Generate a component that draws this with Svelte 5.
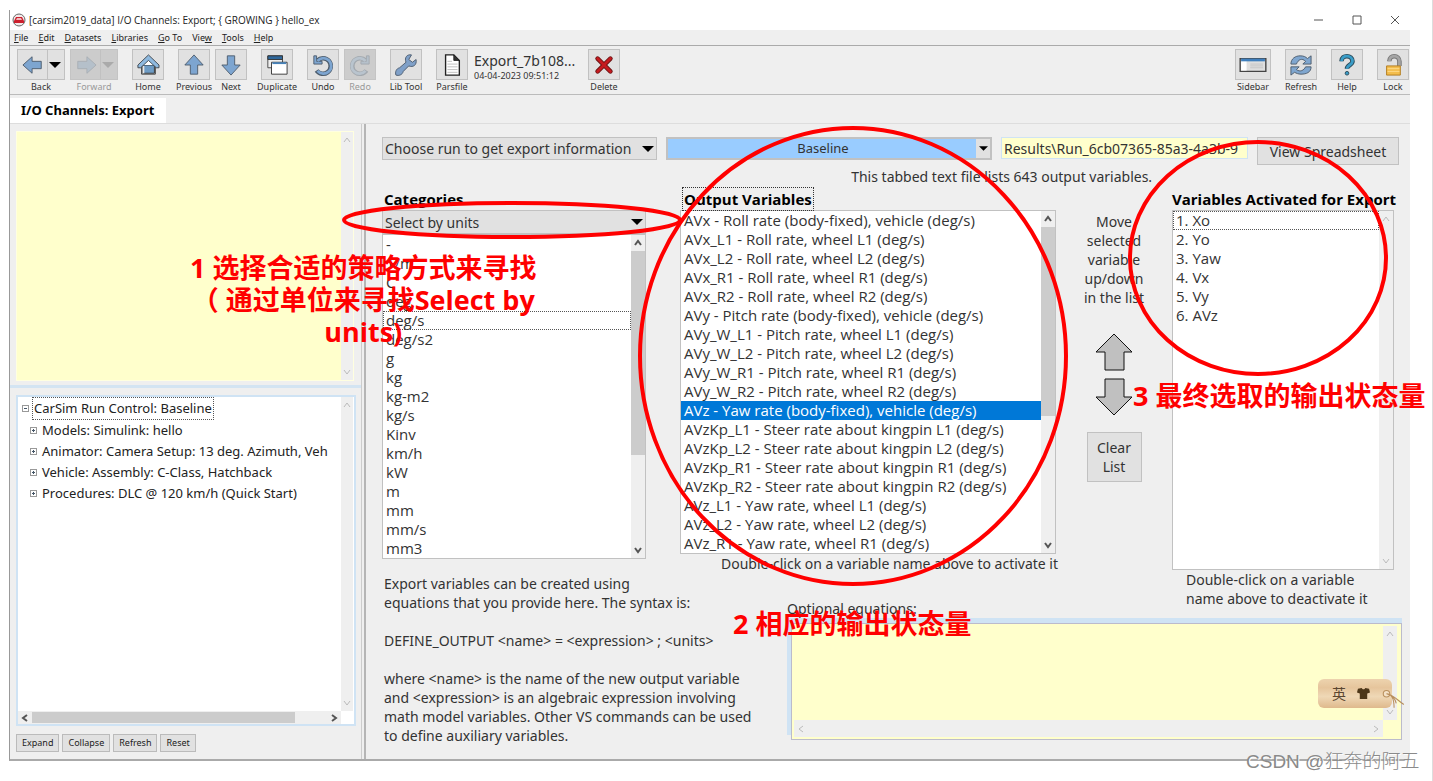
<script lang="ts">
  const menus = [
    ["", "F", "ile"],
    ["", "E", "dit"],
    ["", "D", "atasets"],
    ["", "L", "ibraries"],
    ["", "G", "o To"],
    ["Vie", "w", ""],
    ["", "T", "ools"],
    ["", "H", "elp"],
  ];

  const toolGroups = [
    ["Home"],
    ["Previous", "Next"],
    ["Duplicate"],
    ["Undo", "Redo"],
    ["Lib Tool"],
    ["Parsfile"],
  ];
  const rightTools = ["Sidebar", "Refresh", "Help", "Lock"];

  const treeItems = [
    "Models: Simulink: hello",
    "Animator: Camera Setup: 13 deg. Azimuth, Veh",
    "Vehicle: Assembly: C-Class, Hatchback",
    "Procedures: DLC @ 120 km/h (Quick Start)",
  ];
  const treeActions = ["Expand", "Collapse", "Refresh", "Reset"];

  const units = [
    "-", "1/m", "C", "deg", "deg/s", "deg/s2", "g", "kg", "kg-m2",
    "kg/s", "Kinv", "km/h", "kW", "m", "mm", "mm/s", "mm3",
  ];

  const outputs = [
    "AVx - Roll rate (body-fixed), vehicle (deg/s)",
    "AVx_L1 - Roll rate, wheel L1 (deg/s)",
    "AVx_L2 - Roll rate, wheel L2 (deg/s)",
    "AVx_R1 - Roll rate, wheel R1 (deg/s)",
    "AVx_R2 - Roll rate, wheel R2 (deg/s)",
    "AVy - Pitch rate (body-fixed), vehicle (deg/s)",
    "AVy_W_L1 - Pitch rate, wheel L1 (deg/s)",
    "AVy_W_L2 - Pitch rate, wheel L2 (deg/s)",
    "AVy_W_R1 - Pitch rate, wheel R1 (deg/s)",
    "AVy_W_R2 - Pitch rate, wheel R2 (deg/s)",
    "AVz - Yaw rate (body-fixed), vehicle (deg/s)",
    "AVzKp_L1 - Steer rate about kingpin L1 (deg/s)",
    "AVzKp_L2 - Steer rate about kingpin L2 (deg/s)",
    "AVzKp_R1 - Steer rate about kingpin R1 (deg/s)",
    "AVzKp_R2 - Steer rate about kingpin R2 (deg/s)",
    "AVz_L1 - Yaw rate, wheel L1 (deg/s)",
    "AVz_L2 - Yaw rate, wheel L2 (deg/s)",
    "AVz_R1 - Yaw rate, wheel R1 (deg/s)",
  ];

  let activated = $state(["Xo", "Yo", "Yaw", "Vx", "Vy", "AVz"]);
  let unit = $state("deg/s");
  let output = $state("AVz - Yaw rate (body-fixed), vehicle (deg/s)");
  let resultPath = $state("Results\\Run_6cb07365-85a3-4a3b-9");

  const activate = (item: string): void => {
    activated.push(item.split(" - ")[0]);
  };

  const deactivate = (index: number): void => {
    activated.splice(index, 1);
  };
</script>

{#snippet icon(name: string)}
  <svg class="icon" viewBox="0 0 24 24" aria-hidden="true">
    {#if name === "Back" || name === "Forward"}
      <path
        d={name === "Back" ? "M1 12 11 3v5h10v8H11v5z" : "M23 12 13 3v5H3v8h10v5z"}
        fill={name === "Back" ? "#7da5d0" : "#b5c0ca"}
        stroke={name === "Back" ? "#4d5c6c" : "#a9aeb3"}
      />
    {:else if name === "Home"}
      <path d="M5 11v11h15V11l-7-7z" fill="#fff" stroke="#333" />
      <path d="M6 12h13v9H6z" fill="#6e9cc5" stroke="#333" />
      <path d="M6 12 12.500 6 19 12z" fill="#fff" />
      <path d="M6 13h2v8H6z" fill="#e8e8e8" />
      <path d="M1 12 12.500 1 24 12v3h-3l-8.500-8L4 15H1z" fill="#8eb9df" stroke="#3d454d" />
    {:else if name === "Previous"}
      <path d="M12 1 22 12h-6v10H8V12H2z" fill="#7da5d0" stroke="#4d5c6c" />
    {:else if name === "Next"}
      <path d="M12 23 22 12h-6V2H8v10H2z" fill="#7da5d0" stroke="#4d5c6c" />
    {:else if name === "Duplicate"}
      <path d="M2 2h16v13H2z" fill="#eee" stroke="#444" />
      <path d="M2 2h16v4H2z" fill="#2f689c" stroke="#333" />
      <path d="M6 9h17v13H6z" fill="#fff" stroke="#333" />
      <path d="M7 9h15v2H7z" fill="#4682b9" />
    {:else if name === "Undo"}
      <path d="M5 18a8.500 8.500 0 1 0 1-11" fill="none" stroke="#4d5c6c" stroke-width="5" />
      <path d="M2 2v9h9V8H5V2z" fill="#7da5d0" stroke="#4d5c6c" />
      <path d="M6 18.500a8.500 8.500 0 1 0 0-11" fill="none" stroke="#7da5d0" stroke-width="3" />
    {:else if name === "Redo"}
      <path d="M19 18a8.500 8.500 0 1 1-1-11" fill="none" stroke="#a3a9af" stroke-width="5" />
      <path d="M22 2v9h-9V8h6V2z" fill="#b5c0ca" stroke="#a3a9af" />
      <path d="M18 18.500a8.500 8.500 0 1 1 0-11" fill="none" stroke="#b9c4ce" stroke-width="3" />
    {:else if name === "Lib Tool"}
      <path
        d="M18 1c-5-1-8 3-6 8l-7 6c-4 1-5 5-4 8 3 1 7 0 8-4l6-6c5 2 9-1 8-7l-4 3-4-3z"
        fill="#7fa0c8"
        stroke="#4c5b6d"
      />
    {:else if name === "Parsfile"}
      <path d="M5 1h9l6 6v16H5z" fill="#fff" stroke="#222" stroke-width="1.500" />
      <path d="M14 1v6h6z" fill="#333" stroke="#222" />
      <path d="M7 8h5M7 11h11M7 14h11M7 17h11M7 20h11" stroke="#bbb" />
    {:else if name === "Delete"}
      <path d="m5 5 14 14M19 5 5 19" stroke="#6a1414" stroke-width="5" stroke-linecap="round" />
      <path d="m5 5 14 14M19 5 5 19" stroke="#c61a1f" stroke-width="3" stroke-linecap="round" />
    {:else if name === "Sidebar"}
      <path d="M-2 5h28v14H-2z" fill="#dfdfdf" stroke="#444" stroke-width="1.500" />
      <path d="M-1 6h6v12h-6z" fill="#fff" />
      <path d="M-1 5h26v3H-1z" fill="#3f7fbd" />
      <path d="M9 11h14M9 13h14M9 15h14" stroke="#c4c4c4" />
    {:else if name === "Refresh"}
      <path d="M1 11c0-6 5-9 10-9 4 0 6 1 8 3l4-3v9h-9l3-3c-4-4-8-2-10 3z" fill="#7fa6cf" stroke="#4c5b6b" />
      <path d="M23 14c0 6-5 8-11 8-3 0-5-1-7-2l-4 3v-9h9l-3 3c4 3 8 1 10-3z" fill="#7fa6cf" stroke="#4c5b6b" />
    {:else if name === "Help"}
      <path d="M6 8c0-8 12-7 12 0 0 4-6 4-6 8" fill="none" stroke="#2c4c5b" stroke-width="5" />
      <path d="M6 8c0-8 12-7 12 0 0 4-6 4-6 8" fill="none" stroke="#3a9dc8" stroke-width="3" />
      <circle cx="12" cy="21" r="2" fill="#3a9dc8" stroke="#2c4c5b" />
    {:else if name === "Lock"}
      <path d="M8 8c0-8 11-7 11 0v5" fill="none" stroke="#777" stroke-width="5" />
      <path d="M8 8c0-8 11-7 11 0v5" fill="none" stroke="#a5a5a5" stroke-width="3" />
      <path d="M5 13h15v10H5z" fill="#f3bd4c" stroke="#b07a1c" />
      <path d="M6 16h13M6 19h13" stroke="#ffdc8b" />
    {/if}
  </svg>
{/snippet}

{#snippet tool(name: string)}
  <button class="tool" class:panel={name === "Sidebar"} type="button" disabled={name === "Redo"}>
    <span class="tool-face">{@render icon(name)}</span>
    <span class="tool-label">{name}</span>
  </button>
{/snippet}

{#snippet caret()}
  <svg class="caret" viewBox="0 0 12 6" aria-hidden="true"><path d="M0 0h12L6 6z" /></svg>
{/snippet}

{#snippet chevron(turn: string)}
  <svg class="chevron {turn}" viewBox="0 0 8 8" aria-hidden="true"><path d="m1 6 3-4 3 4" /></svg>
{/snippet}

{#snippet scrollbar(thumb: number)}
  <div class="scrollbar" class:idle={thumb === 0}>
    {@render chevron("up")}
    <div class="track"><div class="thumb" style="height: {thumb}%"></div></div>
    {@render chevron("down")}
  </div>
{/snippet}

<div class="page">
  <div class="window">
    <header class="titlebar">
      <svg class="app-icon" viewBox="0 0 14 14" aria-hidden="true">
        <circle cx="7" cy="7" r="6" fill="#f4e9e9" stroke="#666" />
        <path d="M2 8 4 4h6l2 4v2H2z" fill="#cc1f2d" />
        <path d="M5 5h4l1 2H4z" fill="#f2b7bb" />
      </svg>
      <h1>[carsim2019_data] I/O Channels: Export; {"{ GROWING }"} hello_ex</h1>
      <div class="window-buttons">
        <button type="button" aria-label="Minimize">
          <svg viewBox="0 0 10 10"><path d="M0 5h9" /></svg>
        </button>
        <button type="button" aria-label="Maximize">
          <svg viewBox="0 0 10 10"><path d="M1 1h8v8H1z" /></svg>
        </button>
        <button type="button" aria-label="Close">
          <svg viewBox="0 0 10 10"><path d="m1 1 8 8M9 1 1 9" /></svg>
        </button>
      </div>
    </header>

    <nav class="menubar">
      {#each menus as [before, key, after]}
        <button type="button">{before}<u>{key}</u>{after}</button>
      {/each}
    </nav>

    <div class="toolbar">
      <div class="tool-group">
        <button class="tool wide" type="button">
          <span class="tool-face split"><span>{@render icon("Back")}</span>{@render caret()}</span>
          <span class="tool-label">Back</span>
        </button>
        <button class="tool wide" type="button" disabled>
          <span class="tool-face split"><span>{@render icon("Forward")}</span>{@render caret()}</span>
          <span class="tool-label">Forward</span>
        </button>
      </div>
      {#each toolGroups as group}
        <div class="tool-group">
          {#each group as name}
            {@render tool(name)}
          {/each}
        </div>
      {/each}
      <div class="file-info">
        <strong>Export_7b108...</strong>
        <span>04-04-2023 09:51:12</span>
      </div>
      {@render tool("Delete")}
      <div class="tool-group right">
        {#each rightTools as name}
          {@render tool(name)}
        {/each}
      </div>
    </div>

    <div class="tabs">
      <h2>I/O Channels: Export</h2>
    </div>

    <div class="body">
      <aside>
        <div class="memo">
          <textarea aria-label="Notes"></textarea>
          {@render scrollbar(0)}
        </div>
        <div class="divider"></div>
        <div class="tree">
          <ul>
            <li class="root">
              <span class="toggle minus"></span>
              <span class="root-name">CarSim Run Control: Baseline</span>
            </li>
            {#each treeItems as item}
              <li><span class="toggle"></span>{item}</li>
            {/each}
          </ul>
          {@render scrollbar(0)}
          <div class="hscroll">
            {@render chevron("left")}
            <div class="htrack"><div class="hthumb"></div></div>
            {@render chevron("right")}
          </div>
        </div>
        <div class="tree-actions">
          {#each treeActions as action}
            <button type="button">{action}</button>
          {/each}
        </div>
      </aside>

      <main>
        <div class="run-row">
          <div class="combo choose">
            <select aria-label="Run information">
              <option>Choose run to get export information</option>
            </select>
            {@render caret()}
          </div>
          <div class="combo baseline">
            <select aria-label="Run">
              <option>Baseline</option>
            </select>
            <span class="drop">{@render caret()}</span>
          </div>
          <input type="text" aria-label="Results file" bind:value={resultPath} />
          <button class="push" type="button">View Spreadsheet</button>
        </div>
        <p class="file-count">This tabbed text file lists 643 output variables.</p>

        <div class="panels">
          <section class="categories">
            <h3>Categories</h3>
            <div class="combo">
              <select aria-label="Categories">
                <option>Select by units</option>
              </select>
              {@render caret()}
            </div>
            <div class="listbox">
              <ul role="listbox" aria-label="Units">
                {#each units as item}
                  <li role="option" aria-selected={unit === item} class:focused={unit === item}>{item}</li>
                {/each}
              </ul>
              {@render scrollbar(70)}
            </div>
          </section>

          <section class="outputs">
            <h3><span class="focus-ring">Output Variables</span></h3>
            <div class="listbox">
              <ul role="listbox" aria-label="Output Variables">
                {#each outputs as item}
                  <li
                    role="option"
                    aria-selected={output === item}
                    class:selected={output === item}
                    ondblclick={() => activate(item)}
                  >{item}</li>
                {/each}
              </ul>
              {@render scrollbar(61)}
            </div>
            <p>Double-click on a variable name above to activate it</p>
          </section>

          <section class="mover">
            <p>Move<br />selected<br />variable<br />up/down<br />in the list</p>
            <button class="arrow" type="button" aria-label="Move up">
              <svg viewBox="0 0 38 38"><path d="M19 1 37 19h-8v18H10V19H1z" /></svg>
            </button>
            <button class="arrow" type="button" aria-label="Move down">
              <svg viewBox="0 0 38 38"><path d="M19 37 37 19h-8V1H10v18H1z" /></svg>
            </button>
            <button class="push clear" type="button" onclick={() => (activated = [])}>Clear<br />List</button>
          </section>

          <section class="activated">
            <h3>Variables Activated for Export</h3>
            <div class="listbox">
              <ul role="listbox" aria-label="Variables Activated for Export">
                {#each activated as item, i}
                  <li
                    role="option"
                    aria-selected={i === 0}
                    class:focused={i === 0}
                    ondblclick={() => deactivate(i)}
                  >{i + 1}. {item}</li>
                {/each}
              </ul>
              {@render scrollbar(0)}
            </div>
            <p>Double-click on a variable<br />name above to deactivate it</p>
          </section>

          <div class="help-text">
            <p>Export variables can be created using<br />equations that you provide here. The syntax is:</p>
            <p>DEFINE_OUTPUT &lt;name&gt; = &lt;expression&gt; ; &lt;units&gt;</p>
            <p>
              where &lt;name&gt; is the name of the new output variable<br />
              and &lt;expression&gt; is an algebraic expression involving<br />
              math model variables. Other VS commands can be used<br />
              to define auxiliary variables.
            </p>
          </div>

          <label class="equations-label" for="equations">Optional equations:</label>
          <div class="equations">
            <textarea id="equations"></textarea>
            {@render scrollbar(0)}
            <div class="hscroll idle">
              {@render chevron("left")}
              <div class="htrack"></div>
              {@render chevron("right")}
            </div>
          </div>
        </div>
      </main>
    </div>
  </div>

  <svg class="marks" aria-hidden="true">
    <ellipse cx="512" cy="220" rx="168" ry="17" />
    <ellipse cx="853" cy="356" rx="213" ry="228" />
    <ellipse cx="1258" cy="258" rx="128" ry="116" />
  </svg>
  <p class="note first">1 选择合适的策略方式来寻找<br />（ 通过单位来寻找Select by<br />units)</p>
  <p class="note second">2 相应的输出状态量</p>
  <p class="note third">3 最终选取的输出状态量</p>

  <div class="ime">
    <span>英</span>
    <svg class="shirt" viewBox="0 0 14 14" aria-hidden="true">
      <path d="M1 2 5 1c1 2 3 2 4 0l4 1 1 4-3 1v6H3V7L0 6z" />
    </svg>
    <svg class="string" viewBox="0 0 24 24" aria-hidden="true">
      <circle cx="6" cy="8" r="3" fill="#f4e2c8" stroke="#b98f5d" />
      <path d="M6 8c5 0 7 5 7 13M7 8c5 1 9 6 15 10M6 8c4 1 8 4 9 9" />
    </svg>
  </div>

  <span class="watermark">CSDN @狂奔的阿五</span>
</div>

<style>
  :global(body) {
    background: #fff;
  }

  .page {
    position: relative;
    padding: 10px 22px 20px 9px;
    border-right: 1px solid #ddd;
    color: #333;
    font-family: "Noto Sans", "Noto Sans CJK SC", sans-serif;
    font-size: 14px;
    line-height: 19px;
  }

  .page * {
    box-sizing: border-box;
  }

  h1,
  h2,
  h3,
  p,
  ul {
    margin: 0;
    padding: 0;
  }

  li {
    list-style: none;
  }

  button,
  select,
  input,
  textarea {
    margin: 0;
    padding: 0;
    border: 0;
    border-radius: 0;
    color: inherit;
    font: inherit;
  }

  .window {
    border-left: 1px solid #999;
    border-bottom: 2px solid #aaa;
    background: #efefef;
  }

  .titlebar {
    display: flex;
    align-items: center;
    gap: 3px;
    height: 20px;
    padding: 0 10px 0 2px;
    background: #fff;
  }

  .app-icon {
    width: 14px;
    height: 14px;
  }

  h1 {
    color: #222;
    font-family: "Open Sans", sans-serif;
    font-size: 10px;
    font-weight: 400;
  }

  .window-buttons {
    display: flex;
    gap: 28px;
    margin-left: auto;
  }

  .window-buttons button {
    display: flex;
    background: none;
  }

  .window-buttons svg {
    width: 10px;
    height: 10px;
    fill: none;
    stroke: #555;
  }

  .menubar {
    display: flex;
    gap: 10px;
    height: 16px;
    padding-left: 4px;
    border-bottom: 1px solid #aaa;
    font-size: 9px;
    line-height: 14px;
  }

  .menubar button {
    background: none;
    color: #222;
  }

  .toolbar {
    display: flex;
    gap: 14px;
    height: 49px;
    padding: 3px 1px 0 7px;
    border-bottom: 1px solid #bbb;
  }

  .tool-group {
    display: flex;
    gap: 5px;
  }

  .tool-group.right {
    gap: 14px;
    margin-left: auto;
  }

  .tool {
    display: flex;
    flex-direction: column;
    align-items: center;
    width: 32px;
    background: none;
    font-size: 9px;
    line-height: 14px;
  }

  .tool.panel {
    width: 36px;
  }

  .tool.wide {
    width: 48px;
  }

  .tool:disabled {
    color: #999;
  }

  .tool-face {
    display: flex;
    align-items: center;
    justify-content: center;
    width: 100%;
    height: 31px;
    border: 1px solid #c1c1c1;
    background: #e1e1e1;
  }

  .tool:disabled .tool-face {
    background: #ccc;
    border-color: #c4c4c4;
  }

  .tool-face.split {
    justify-content: space-between;
    padding-right: 3px;
  }

  .split span {
    display: flex;
    align-items: center;
    height: 100%;
    padding: 0 3px 0 4px;
    border-right: 1px solid #c1c1c1;
  }

  .tool-label {
    white-space: nowrap;
  }

  .icon {
    flex: none;
    width: 22px;
    height: 22px;
    overflow: visible;
  }

  .caret {
    flex: none;
    width: 12px;
    height: 6px;
    fill: #000;
    pointer-events: none;
  }

  .tool:disabled .caret {
    fill: #aaa;
  }

  .file-info {
    display: flex;
    flex-direction: column;
    width: 100px;
    margin-left: -8px;
    padding-top: 3px;
    font-size: 9px;
    line-height: 11px;
    white-space: nowrap;
  }

  .file-info strong {
    font-size: 14px;
    font-weight: 400;
    line-height: 18px;
  }

  .tabs {
    padding-top: 3px;
    border-bottom: 1px solid #ddd;
  }

  h2 {
    width: max-content;
    padding: 0 12px 0 11px;
    background: #fff;
    color: #000;
    font-size: 13px;
    font-weight: 700;
    line-height: 25px;
  }

  .body {
    display: grid;
    grid-template-columns: 356px 1fr;
  }

  aside {
    display: flex;
    flex-direction: column;
    padding: 7px 8px 7px 6px;
    border-right: 2px solid #b5b5b5;
    box-shadow: inset -2px 0 #efefef, inset -3px 0 #ccc;
  }

  .memo {
    display: flex;
    height: 250px;
    margin-right: 2px;
    border: 1px solid #ffffe0;
    background: #efefef;
  }

  .memo textarea {
    flex: 1;
    background: #ffc;
    resize: none;
  }

  .divider {
    height: 3px;
    margin: 4px -5px 7px -6px;
    background: #d3e4f2;
  }

  .tree {
    display: grid;
    flex: 1;
    grid-template-columns: 1fr 13px;
    grid-template-rows: 1fr 13px;
    border: 2px solid #cfe3f4;
    background: #fff;
  }

  .tree ul {
    overflow: hidden;
    color: #222;
    font-size: 13px;
    line-height: 21px;
    white-space: nowrap;
  }

  .tree li {
    display: flex;
    align-items: center;
    gap: 5px;
    padding-left: 12px;
  }

  .tree .root {
    gap: 3px;
    padding-left: 4px;
  }

  .root-name {
    padding: 0 1px;
    border: 1px dotted #555;
  }

  .toggle {
    flex: none;
    width: 7px;
    height: 7px;
    border: 1px solid #999;
    background:
      linear-gradient(#456, #456) center / 3px 1px no-repeat,
      linear-gradient(#456, #456) center / 1px 3px no-repeat,
      #fff;
  }

  .toggle.minus {
    background: linear-gradient(#456, #456) center / 3px 1px no-repeat #fff;
  }

  .scrollbar {
    display: flex;
    flex: none;
    flex-direction: column;
    align-items: center;
    width: 14px;
    padding: 4px 0;
    background: #efefef;
  }

  .tree .scrollbar,
  .memo .scrollbar {
    width: 12px;
  }

  .track {
    flex: 1;
    width: 100%;
    margin: 4px 0;
  }

  .thumb {
    background: #ccc;
  }

  .chevron {
    flex: none;
    width: 8px;
    height: 8px;
    fill: none;
    stroke: #555;
    stroke-width: 2;
  }

  .idle .chevron {
    stroke: #bbb;
    stroke-width: 1;
  }

  .down {
    transform: rotate(180deg);
  }

  .left {
    transform: rotate(-90deg);
  }

  .right.chevron {
    transform: rotate(90deg);
  }

  .hscroll {
    display: flex;
    align-items: center;
    padding: 0 3px;
    background: #efefef;
  }

  .htrack {
    flex: 1;
    height: 11px;
    margin: 0 3px;
  }

  .hthumb {
    width: 89%;
    height: 100%;
    background: #ccc;
  }

  .tree-actions {
    display: flex;
    gap: 3px;
    padding-top: 8px;
  }

  .tree-actions button {
    height: 18px;
    padding: 0 5px;
    border: 1px solid #bbb;
    background: #e1e1e1;
    color: #222;
    font-size: 9px;
    line-height: 14px;
  }

  main {
    padding: 13px 8px 14px 16px;
  }

  .run-row {
    display: grid;
    grid-template-columns: 275fr 326fr 247fr 142fr;
    align-items: start;
    column-gap: 9px;
    padding-right: 3px;
  }

  .combo {
    display: grid;
    grid-template-columns: 1fr 14px;
    align-items: center;
    height: 23px;
    border: 1px solid #c1c1c1;
    background: #e1e1e1;
  }

  .combo select {
    grid-area: 1 / 1 / 2 / 3;
    width: 100%;
    height: 21px;
    padding-left: 2px;
    appearance: none;
    background: none;
    line-height: 19px;
  }

  .combo > .caret {
    grid-area: 1 / 2;
  }

  .combo.baseline {
    border-width: 2px;
  }

  .baseline select {
    height: 19px;
    padding-right: 14px;
    background: #9cf;
    font-size: 13px;
    text-align-last: center;
  }

  .drop {
    display: flex;
    grid-area: 1 / 2;
    align-items: center;
    justify-content: center;
    height: 19px;
    background: #e1e1e1;
    pointer-events: none;
  }

  .drop .caret {
    width: 9px;
    height: 5px;
  }

  .run-row input {
    min-width: 0;
    width: 100%;
    height: 22px;
    padding: 0 2px;
    border: 1px solid #cfe3f4;
    background: #ffc;
  }

  .push {
    border: 1px solid #c1c1c1;
    background: #e1e1e1;
  }

  .run-row .push {
    height: 28px;
  }

  .file-count {
    margin: 2px 0 0 46%;
    white-space: nowrap;
  }

  .panels {
    display: grid;
    grid-template-columns: 264fr 34px 107fr 269fr 116px 222fr 8px;
    grid-template-rows: auto 45px auto;
  }

  .panels section {
    min-width: 0;
  }

  h3 {
    height: 24px;
    padding-top: 3px;
    color: #000;
    font-family: "Open Sans", sans-serif;
    font-size: 15px;
    font-weight: 700;
    line-height: 20px;
    white-space: nowrap;
  }

  .focus-ring {
    padding: 1px;
    outline: 1px dotted #333;
  }

  .categories {
    grid-area: 1 / 1;
  }

  .categories h3 {
    padding-left: 2px;
  }

  .categories .combo {
    height: 24px;
  }

  .listbox {
    display: flex;
    border: 1px solid #c1c1c1;
    background: #fff;
    font-family: "Open Sans", sans-serif;
    font-size: 15px;
  }

  .listbox ul {
    flex: 1;
    min-width: 0;
    overflow: hidden;
    white-space: nowrap;
  }

  .listbox li {
    height: 19px;
    padding-left: 3px;
  }

  .focused {
    outline: 1px dotted #555;
    outline-offset: -1px;
  }

  .selected {
    background: #0078d7;
    color: #fff;
  }

  .outputs {
    grid-area: 1 / 3 / 2 / 5;
  }

  .outputs h3 {
    padding-left: 3px;
  }

  .outputs p {
    padding-left: 41px;
    white-space: nowrap;
  }

  .mover {
    display: flex;
    grid-area: 1 / 5;
    flex-direction: column;
    align-items: center;
    padding-top: 26px;
    text-align: center;
  }

  .arrow {
    display: flex;
    margin-top: 7px;
    background: none;
  }

  p + .arrow {
    margin-top: 26px;
  }

  .arrow svg {
    width: 38px;
    height: 38px;
    fill: #c0c0c0;
    stroke: #111;
  }

  .clear {
    width: 55px;
    height: 50px;
    margin-top: 16px;
  }

  .activated {
    grid-area: 1 / 6 / 3 / 7;
  }

  .activated .listbox {
    height: 360px;
  }

  .activated p {
    padding-left: 14px;
    white-space: nowrap;
  }

  .help-text {
    display: grid;
    grid-area: 2 / 1 / 4 / 4;
    gap: 19px;
    padding: 1px 0 0 2px;
    white-space: nowrap;
  }

  .equations-label {
    grid-area: 2 / 4 / 3 / 6;
    align-self: end;
  }

  .equations {
    display: grid;
    grid-area: 3 / 4 / 4 / 8;
    grid-template-columns: 1fr 16px;
    grid-template-rows: 1fr 17px;
    align-self: start;
    height: 117px;
    margin: 5px 0 0 4px;
    padding: 2px;
    border: 1px solid #bbc;
    background: #ffc;
    box-shadow: -4px -5px #cfe3f4, 0 -5px #cfe3f4;
  }

  .equations textarea {
    background: #ffc;
    resize: none;
  }

  .marks {
    position: absolute;
    top: 0;
    left: 0;
    width: 100%;
    height: 100%;
    fill: none;
    stroke: #f00;
    stroke-width: 4;
    pointer-events: none;
  }

  .note {
    position: absolute;
    color: #f00;
    font-family: "Open Sans", "Noto Sans CJK SC", sans-serif;
    font-size: 27px;
    font-weight: 700;
    line-height: 32px;
    text-align: center;
    white-space: nowrap;
    pointer-events: none;
  }

  .note.first {
    top: 252px;
    left: 190px;
  }

  .note.second {
    top: 608px;
    left: 733px;
  }

  .note.third {
    top: 380px;
    left: 1133px;
  }

  .ime {
    position: absolute;
    top: 679px;
    left: 1318px;
    display: flex;
    align-items: center;
    gap: 11px;
    width: 74px;
    height: 29px;
    padding-left: 14px;
    border-radius: 6px;
    background: linear-gradient(#edd3ae, #e6c59c 30%, #efd8b6 60%, #dfb98c);
    color: #5b4630;
    font-family: "Noto Sans CJK SC", sans-serif;
  }

  .shirt {
    width: 13px;
    height: 13px;
    fill: #4d3719;
  }

  .string {
    position: absolute;
    top: 6px;
    left: 62px;
    width: 26px;
    height: 26px;
    fill: none;
    stroke: #b98f5d;
  }

  .watermark {
    position: absolute;
    top: 750px;
    left: 1246px;
    color: #8a8a8a;
    font-family: "Liberation Sans", "Noto Sans CJK SC", sans-serif;
    font-size: 19px;
    font-weight: 300;
    line-height: 24px;
    text-shadow: 1px 1px #fff;
    white-space: nowrap;
  }
</style>
